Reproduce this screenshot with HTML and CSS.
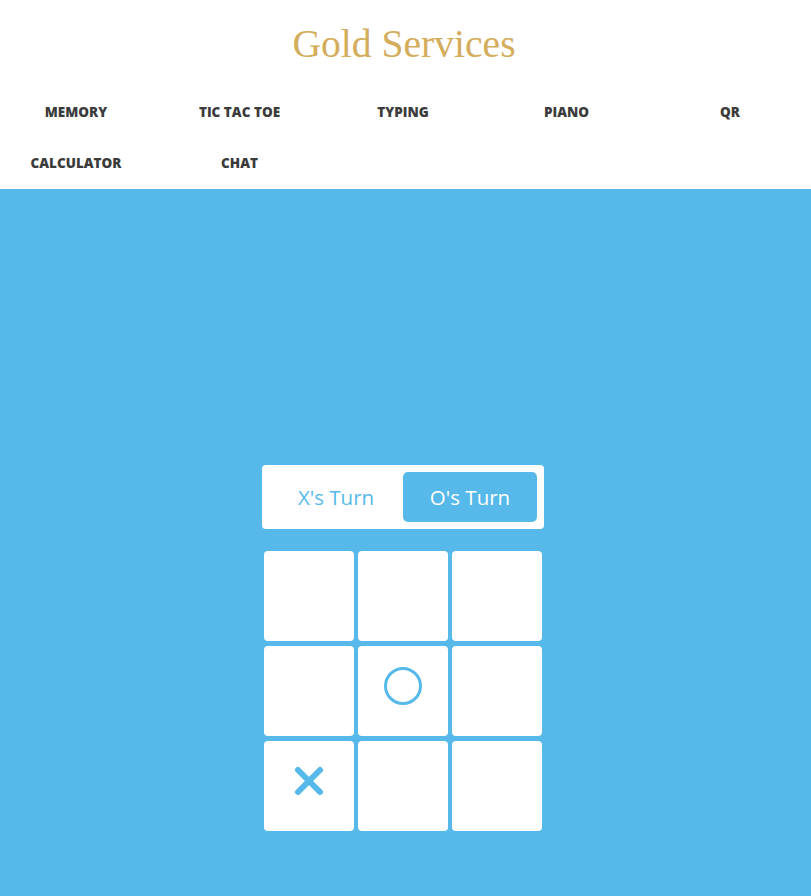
FILE: index.html
```html
<!DOCTYPE html>
<html lang="en">
<head>
<meta charset="utf-8">
<title>Gold Services</title>
<link rel="stylesheet" href="styles.css">
</head>
<body>
<header class="header">
  <h1 class="title">Gold Services</h1>
  <nav class="nav">
    <a class="nav-link" href="#">MEMORY</a>
    <a class="nav-link" href="#">TIC TAC TOE</a>
    <a class="nav-link" href="#">TYPING</a>
    <a class="nav-link" href="#">PIANO</a>
    <a class="nav-link" href="#">QR</a>
    <a class="nav-link" href="#">CALCULATOR</a>
    <a class="nav-link" href="#">CHAT</a>
  </nav>
</header>
<main class="game">
  <div class="turns">
    <div class="turn">X's Turn</div>
    <div class="turn turn-active">O's Turn</div>
  </div>
  <div class="board">
    <div class="cell"></div>
    <div class="cell"></div>
    <div class="cell"></div>
    <div class="cell"></div>
    <div class="cell"><svg class="mark" width="40" height="40" viewBox="0 0 40 40"><circle cx="20" cy="20" r="17.5" fill="none" stroke="#56b9ea" stroke-width="3"/></svg></div>
    <div class="cell"></div>
    <div class="cell"><svg class="mark" width="32" height="32" viewBox="0 0 32 32"><path d="M5 5 L27 27 M27 5 L5 27" stroke="#56b9ea" stroke-width="6" stroke-linecap="round"/></svg></div>
    <div class="cell"></div>
    <div class="cell"></div>
  </div>
</main>
</body>
</html>
```
FILE: styles.css
```css
* { box-sizing: border-box; }
html, body { margin: 0; padding: 0; }
body {
  background: #56b9ea;
  font-family: "Open Sans", "Liberation Sans", sans-serif;
}
.header {
  background: #ffffff;
  height: 189px;
  padding-top: 22px;
}
.title {
  margin: 0 0 0 -3px;
  text-align: center;
  font-family: "Liberation Serif", "Times New Roman", serif;
  font-weight: normal;
  font-size: 39.6px;
  line-height: 44px;
  color: #d4ad5c;
}
.nav {
  display: grid;
  grid-template-columns: repeat(5, 152px);
  column-gap: 11.5px;
  grid-auto-rows: 51px;
  margin-top: 21px;
}
.nav-link {
  text-align: center;
  text-decoration: none;
  color: #3b3b3b;
  font-weight: 800;
  font-size: 13.5px;
  line-height: 51px;
}
.game {
  display: flex;
  flex-direction: column;
  align-items: center;
  padding-top: 276px;
  padding-right: 5px;
}
.turns {
  display: flex;
  width: 282px;
  height: 64px;
  padding: 7px;
  background: #ffffff;
  border-radius: 4px;
}
.turn {
  flex: 1;
  display: flex;
  align-items: center;
  justify-content: center;
  font-size: 20.5px;
  color: #56b9ea;
  border-radius: 5px;
  font-weight: 500;
}
.turn-active {
  background: #56b9ea;
  color: #ffffff;
}
.board {
  display: grid;
  grid-template-columns: repeat(3, 90px);
  grid-auto-rows: 90px;
  gap: 5px 4px;
  margin-top: 22px;
}
.cell {
  background: #ffffff;
  border-radius: 4px;
  display: flex;
  align-items: center;
  justify-content: center;
}
.mark {
  margin-bottom: 10px;
}
```
